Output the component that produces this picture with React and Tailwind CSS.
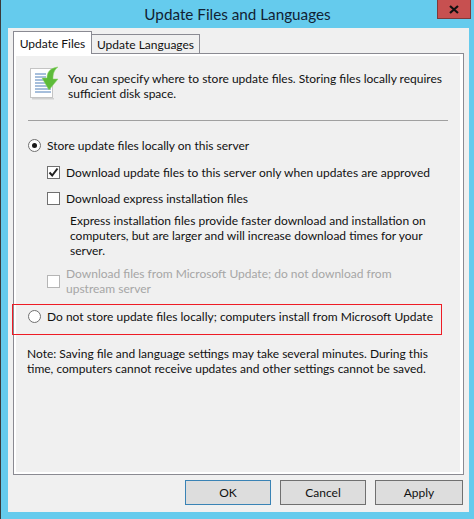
import React from "react";

const Radio = ({ checked }) => (
  <span className="w-[13px] h-[13px] rounded-full border border-[#707070] bg-white flex items-center justify-center shrink-0">
    {checked && <span className="w-[5px] h-[5px] rounded-full bg-[#1a1a1a]" />}
  </span>
);

const Checkbox = ({ checked, disabled }) => (
  <span
    className={`w-[13px] h-[13px] border bg-white flex items-center justify-center shrink-0 ${
      disabled ? "border-[#b5b5b5]" : "border-[#707070]"
    }`}
  >
    {checked && (
      <svg width="11" height="11" viewBox="0 0 11 11">
        <path d="M1.5 5.5 L4.2 8.5 L9.5 1.5" fill="none" stroke="#222" strokeWidth="2" />
      </svg>
    )}
  </span>
);

const DocIcon = () => (
  <svg width="32" height="34" viewBox="0 0 32 34" className="shrink-0">
    <rect x="0.5" y="2.5" width="22" height="29" fill="#fff" stroke="#c4c4c4" />
    <rect x="2" y="32" width="22" height="1.5" fill="#d0d0d0" />
    <path
      d="M5 8h11M5 11h11M5 14h11M5 17h11M5 20h16M5 23h16M5 26h16"
      stroke="#4f7fb8"
      strokeWidth="1"
    />
    <path
      d="M28 1 C20 2 17 6 17 12 L12 12 L19 24 L28 13 L23 13 C23 8 24 4 28 1 Z"
      fill="#5dbb3a"
      stroke="#8fd46f"
      strokeWidth="0.5"
    />
  </svg>
);

const DialogButton = ({ children, focused, className }) => (
  <button
    className={`h-[25px] bg-[#dddddd] border text-[#111] ${className} ${
      focused ? "border-[#3a83b5]" : "border-[#707070]"
    }`}
  >
    {children}
  </button>
);

const App = () => {
  return (
    <div className="w-[474px] h-[519px] bg-[#65cbed] border-l border-[#3a3a3a] relative overflow-hidden flex flex-col text-[12px] leading-[15px] whitespace-nowrap text-[#111] font-['Lato',sans-serif]">
      <div className="h-[28px] flex items-center justify-center text-[15.25px] text-[#123]">
        Update Files and Languages
      </div>
      <div className="absolute top-0 right-[3px] w-[34px] h-[19px] bg-[#c75050] border border-[#7d3a3a] border-t-0 flex items-center justify-center">
        <svg width="10" height="9" viewBox="0 0 10 9">
          <path d="M1 1 L9 8 M9 1 L1 8" stroke="#111" strokeWidth="2.2" />
        </svg>
      </div>

      <div className="ml-[7px] mr-[5px] h-[484px] bg-[#f0f0f0] pt-[4px] px-[5px] flex flex-col">
        <div className="flex items-end h-[22px] relative z-10 -mb-[1px]">
          <div className="w-[79px] h-[23px] bg-white border border-b-0 border-[#8a8a92] flex items-center justify-center">
            Update Files
          </div>
          <div className="w-[108px] h-[20px] border border-l-0 border-[#8a8a92] flex items-center justify-center">
            Update Languages
          </div>
        </div>

        <div className="w-[451px] h-[422px] border border-[#8a8a92] bg-white p-[2px] pr-[3px]">
          <div className="h-full bg-[#f0f0f0] pt-[10px] pl-[12px] pr-[12px]">
            <div className="flex gap-[6px] pl-[2px]">
              <DocIcon />
              <p className="pt-[5px]">
                You can specify where to store update files. Storing files locally requires
                <br />
                sufficient disk space.
              </p>
            </div>
            <div className="h-px bg-[#a0a0a0] mt-[19px]" />

            <div className="flex items-center gap-[6px] mt-[17px]">
              <Radio checked />
              <span>Store update files locally on this server</span>
            </div>
            <div className="ml-[19px] mt-[12px] flex items-center gap-[6px]">
              <Checkbox checked />
              <span>Download update files to this server only when updates are approved</span>
            </div>
            <div className="ml-[19px] mt-[11px] flex items-center gap-[6px]">
              <Checkbox />
              <span>Download express installation files</span>
            </div>
            <p className="ml-[42px] mt-[7px]">
              Express installation files provide faster download and installation on
              <br />
              computers, but are larger and will increase download times for your
              <br />
              server.
            </p>
            <div className="ml-[19px] mt-[8px] flex items-center gap-[6px] text-[#a6a6a6]">
              <Checkbox disabled />
              <span>
                Download files from Microsoft Update; do not download from
                <br />
                upstream server
              </span>
            </div>

            <div className="relative flex items-center gap-[6px] mt-[13px]">
              <Radio />
              <span>Do not store update files locally; computers install from Microsoft Update</span>
              <div className="absolute -left-[16px] -top-[5px] w-[430px] h-[31px] border border-[#ee1c25]" />
            </div>

            <p className="mt-[22px] -ml-[1px]">
              Note: Saving file and language settings may take several minutes. During this
              <br />
              time, computers cannot receive updates and other settings cannot be saved.
            </p>
          </div>
        </div>

        <div className="flex justify-end gap-[9px] mt-[5px] pr-[1px]">
          <DialogButton focused className="w-[86px]">OK</DialogButton>
          <DialogButton className="w-[86px]">Cancel</DialogButton>
          <DialogButton className="w-[88px]">Apply</DialogButton>
        </div>
      </div>
    </div>
  );
};

export default App;
